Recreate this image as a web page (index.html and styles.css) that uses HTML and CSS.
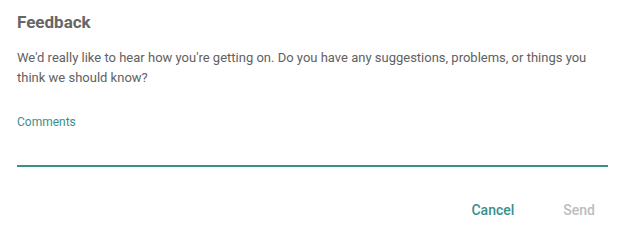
FILE: index.html
```html
<!DOCTYPE html>
<html lang="en">
<head>
  <meta charset="UTF-8">
  <title>Feedback</title>
  <link rel="stylesheet" href="styles.css">
</head>
<body>
  <div class="dialog">
    <h2 class="dialog-title">Feedback</h2>
    <p class="dialog-text">We'd really like to hear how you're getting on. Do you have any suggestions, problems, or things you think we should know?</p>
    <div class="field">
      <label class="field-label" for="comments">Comments</label>
      <textarea class="field-input" id="comments" rows="1"></textarea>
    </div>
    <div class="dialog-actions">
      <button class="btn btn-primary">Cancel</button>
      <button class="btn btn-disabled" disabled>Send</button>
    </div>
  </div>
</body>
</html>
```

FILE: styles.css
```css
:root {
  --teal: #3a8f8c;
  --text: #666666;
  --text-muted: #bdbdbd;
}

* {
  margin: 0;
  padding: 0;
  box-sizing: border-box;
}

body {
  font-family: Roboto, "Liberation Sans", sans-serif;
  background: #ffffff;
  color: var(--text);
  -webkit-font-smoothing: antialiased;
}

.dialog {
  width: 623px;
  padding: 12px 15px 0 17px;
}

.dialog-title {
  font-size: 17px;
  font-weight: 700;
  line-height: 20px;
  color: #666666;
}

.dialog-text {
  margin-top: 16px;
  font-size: 13px;
  line-height: 20px;
  color: #616161;
}

.field {
  margin-top: 27px;
  display: flex;
  flex-direction: column;
}

.field-label {
  font-size: 12px;
  line-height: 14px;
  color: var(--teal);
}

.field-input {
  margin-top: 28px;
  height: 10px;
  border: none;
  border-bottom: 2px solid var(--teal);
  resize: none;
  outline: none;
  font: inherit;
}

.dialog-actions {
  display: flex;
  justify-content: flex-end;
  gap: 45px;
  margin-top: 35px;
  padding-right: 11px;
}

.btn {
  background: none;
  border: none;
  font-family: inherit;
  font-size: 14px;
  font-weight: 500;
  line-height: 16px;
  padding: 0 2px;
}

.btn-primary {
  color: var(--teal);
}

.btn-disabled {
  color: var(--text-muted);
}
```
